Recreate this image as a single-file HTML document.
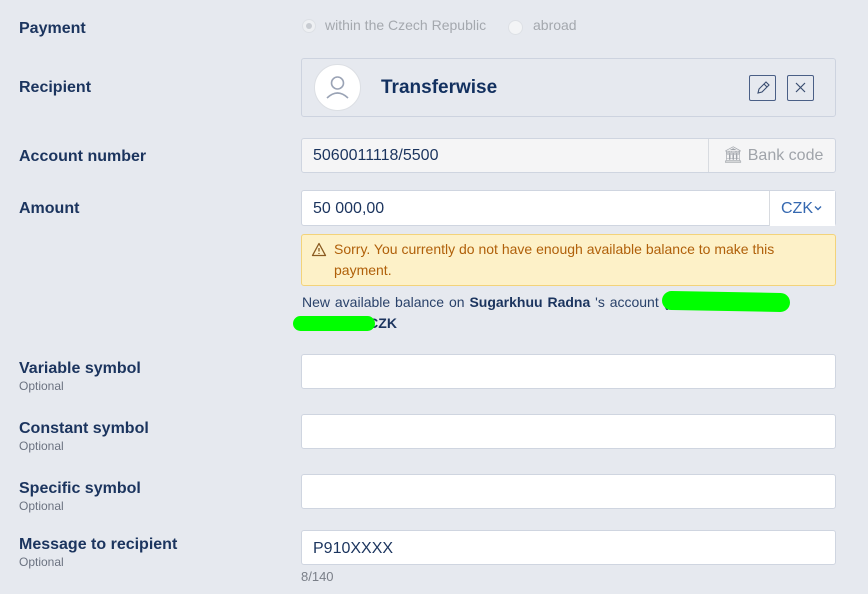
<html><head><style>
body{margin:0;width:868px;height:594px;background:#e6e9ef;font-family:"Liberation Sans",sans-serif;position:relative;overflow:hidden;color:#1b345e}
.a{position:absolute}
.l{position:absolute;left:19px;font-weight:bold;font-size:16px;color:#1b345e}
.o{position:absolute;left:19px;font-size:12px;color:#6b7280}
.in{position:absolute;left:301px;width:535px;height:34px;background:#fff;border:1px solid #cfd5e0;border-radius:3px;box-sizing:border-box;font-size:16px;line-height:34px;padding-left:11px;color:#1b345e}
</style></head><body>
<div class="l" style="top:20px">Payment</div>
<div class="a" style="left:302px;top:19px;width:14px;height:14px;border-radius:50%;background:#eef0f3;border:1px solid #dde0e5;box-sizing:border-box"><div style="width:6px;height:6px;border-radius:50%;background:#c8ccd2;margin:3px"></div></div>
<div class="a" style="left:325px;top:17px;font-size:14px;color:#a4a8ae">within the Czech Republic</div>
<div class="a" style="left:508px;top:20px;width:15px;height:15px;border-radius:50%;background:#f3f4f6;border:1px solid #dde0e5;box-sizing:border-box"></div>
<div class="a" style="left:533px;top:17px;font-size:14px;color:#a4a8ae">abroad</div>

<div class="l" style="top:79px">Recipient</div>
<div class="a" style="left:301px;top:58px;width:535px;height:59px;border:1px solid #cdd3df;border-radius:3px;box-sizing:border-box"></div>
<div class="a" style="left:314px;top:64px;width:47px;height:47px;border-radius:50%;background:#fff;border:1px solid #dcdfe4;box-sizing:border-box">
<svg width="45" height="45" viewBox="0 0 45 45"><circle cx="22.5" cy="18" r="6" fill="none" stroke="#9aa3b5" stroke-width="1.6"/><path d="M12 33 Q22.5 23 33 33" fill="none" stroke="#9aa3b5" stroke-width="1.6"/></svg></div>
<div class="a" style="left:381px;top:77px;font-size:19px;font-weight:bold;color:#12305f">Transferwise</div>
<div class="a" style="left:749px;top:75px;width:27px;height:26px;border:1px solid #4a5f86;box-sizing:border-box;border-radius:2px"><svg width="25" height="24" viewBox="0 0 25 24"><path d="M8 17 L9 13 L16 6 L19 9 L12 16 Z M14 8 L17 11" fill="none" stroke="#3a4d70" stroke-width="1.1"/></svg></div>
<div class="a" style="left:787px;top:75px;width:27px;height:26px;border:1px solid #4a5f86;box-sizing:border-box;border-radius:2px"><svg width="25" height="24" viewBox="0 0 25 24"><path d="M8 7 L17 16 M17 7 L8 16" stroke="#3a4d70" stroke-width="1.2"/></svg></div>

<div class="l" style="top:148px">Account number</div>
<div class="in" style="top:138px;background:#f5f5f6;height:35px">5060011118/5500</div>
<div class="a" style="left:708px;top:139px;width:127px;height:33px;border-left:1px solid #d8dbe0;font-size:16px;line-height:33px;color:#a0a4aa;padding-left:14px;box-sizing:border-box">&#x1F3DB;&#xFE0E; Bank code</div>

<div class="l" style="top:200px">Amount</div>
<div class="in" style="top:190px;height:36px;line-height:36px">50 000,00</div>
<div class="a" style="left:769px;top:191px;width:66px;height:35px;border-left:1px solid #d8dbe0;background:#fff;font-size:16px;line-height:36px;color:#3568b0;padding-left:11px;box-sizing:border-box">CZK</div>
<svg class="a" style="left:814px;top:205px" width="8" height="6" viewBox="0 0 8 6"><path d="M1 1.5 L4 4.5 L7 1.5" fill="none" stroke="#3568b0" stroke-width="1.4"/></svg>
<div class="a" style="left:301px;top:234px;width:535px;height:52px;background:#fdf1c8;border:1px solid #f3d37a;border-radius:3px;box-sizing:border-box;font-size:14px;color:#b0600a;line-height:21px;padding:4px 10px 0 32px">Sorry. You currently do not have enough available balance to make this payment.</div>
<svg class="a" style="left:311px;top:242px" width="16" height="15" viewBox="0 0 16 15"><path d="M8 1.5 L14.5 13.5 H1.5 Z" fill="none" stroke="#8a5a20" stroke-width="1.3" stroke-linejoin="round"/><path d="M8 6 V9.5 M8 11 V12" stroke="#8a5a20" stroke-width="1.3"/></svg>
<div class="a" style="left:302px;top:294px;font-size:14px;color:#2a426a;word-spacing:1px">New available balance on <b style="color:#1b345e">Sugarkhuu Radna</b> 's account <b>(xxxxxxxxx0)</b> :</div>
<div class="a" style="left:302px;top:315px;font-size:14px;font-weight:bold;color:#1b345e">xxxxxxxx CZK</div>
<div class="a" style="left:662px;top:292px;width:128px;height:19px;background:#00ff00;border-radius:10px;transform:rotate(1deg)"></div>
<div class="a" style="left:293px;top:316px;width:82px;height:15px;background:#00ff00;border-radius:8px"></div>

<div class="l" style="top:360px">Variable symbol</div><div class="o" style="top:379px">Optional</div>
<div class="in" style="top:354px;height:35px"></div>
<div class="l" style="top:420px">Constant symbol</div><div class="o" style="top:439px">Optional</div>
<div class="in" style="top:414px;height:35px"></div>
<div class="l" style="top:480px">Specific symbol</div><div class="o" style="top:499px">Optional</div>
<div class="in" style="top:474px;height:35px"></div>
<div class="l" style="top:536px">Message to recipient</div><div class="o" style="top:555px">Optional</div>
<div class="in" style="top:530px;height:35px;line-height:35px">P910XXXX</div>
<div class="a" style="left:301px;top:569px;font-size:13px;color:#7a7f88">8/140</div>
</body></html>
